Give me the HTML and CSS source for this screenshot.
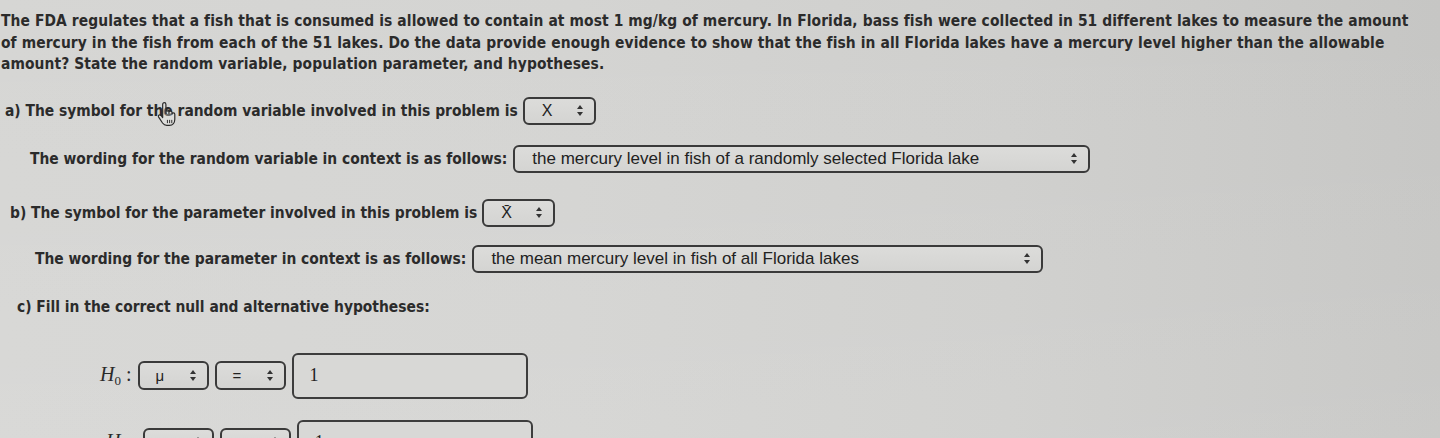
FILE: index.html
```html
<!DOCTYPE html>
<html>
<head>
<meta charset="utf-8">
<link rel="stylesheet" href="styles.css">
</head>
<body>
<div class="page">
  <p class="intro">The FDA regulates that a fish that is consumed is allowed to contain at most 1 mg/kg of mercury. In Florida, bass fish were collected in 51 different lakes to measure the amount of mercury in the fish from each of the 51 lakes. Do the data provide enough evidence to show that the fish in all Florida lakes have a mercury level higher than the allowable amount? State the random variable, population parameter, and hypotheses.</p>

  <div class="row row-a">
    <span class="label">a) The symbol for the random variable involved in this problem is</span>
    <div class="select sel-sym"><span class="val">X</span><span class="arrows"></span></div>
    <svg class="cursor" width="22" height="26" viewBox="0 0 20 24">
      <path d="M6 2.2c0-1 .7-1.6 1.5-1.6S9 1.2 9 2.2V10.5V8.6c0-.9.7-1.4 1.4-1.4s1.4.5 1.4 1.4v2.2V9.6c0-.9.7-1.3 1.4-1.3s1.4.4 1.4 1.3v1.6c0-.8.6-1.2 1.3-1.2s1.3.4 1.3 1.2V16c0 3-1.8 5.6-5 5.6H9.8c-1.8 0-2.9-.8-3.9-2.2L2.3 14c-.5-.8-.3-1.6.4-2s1.5-.1 2 .6L6 14.4Z" fill="rgba(235,235,233,0.35)" stroke="#2a2a2a" stroke-width="1.1" stroke-linejoin="round"/>
      <path d="M10.4 16.5v3M12.4 16.5v3M14.4 16.5v3" stroke="#2a2a2a" stroke-width="0.9"/>
    </svg>
  </div>

  <div class="row row-aw">
    <span class="label">The wording for the random variable in context is as follows:</span>
    <div class="select sel-wide1"><span class="val">the mercury level in fish of a randomly selected Florida lake</span><span class="arrows"></span></div>
  </div>

  <div class="row row-b">
    <span class="label">b) The symbol for the parameter involved in this problem is</span>
    <div class="select sel-sym"><span class="val">X&#772;</span><span class="arrows"></span></div>
  </div>

  <div class="row row-bw">
    <span class="label">The wording for the parameter in context is as follows:</span>
    <div class="select sel-wide2"><span class="val">the mean mercury level in fish of all Florida lakes</span><span class="arrows"></span></div>
  </div>

  <div class="row row-c">
    <span class="label">c) Fill in the correct null and alternative hypotheses:</span>
  </div>

  <div class="hyp hyp-0">
    <span class="hlabel"><i>H</i><sub>0</sub> :</span>
    <div class="select sel-small"><span class="val">μ</span><span class="arrows"></span></div>
    <div class="select sel-small"><span class="val">=</span><span class="arrows"></span></div>
    <div class="input"><span>1</span></div>
  </div>

  <div class="hyp hyp-a">
    <span class="hlabel"><i>H</i><sub>a</sub> :</span>
    <div class="select sel-small"><span class="val">μ</span><span class="arrows"></span></div>
    <div class="select sel-small"><span class="val">&gt;</span><span class="arrows"></span></div>
    <div class="input"><span>1</span></div>
  </div>
</div>
</body>
</html>
```
FILE: styles.css
```css
html, body {
  margin: 0;
  padding: 0;
  height: 438px;
  overflow: hidden;
}
body {
  background:
    linear-gradient(180deg, rgba(255,255,255,0.0) 0%, rgba(255,255,255,0.04) 60%, rgba(255,255,255,0.07) 100%),
    linear-gradient(90deg, #d6d6d4 0%, #d4d4d2 40%, #cfcfcd 70%, #c6c6c4 100%);
  color: #2b2b2b;
  font-family: "DejaVu Sans Condensed", "DejaVu Sans", sans-serif;
}
.page {
  padding-top: 11px;
}
.intro {
  margin: 0;
  padding-left: 1px;
  width: 1410px;
  font-size: 15.4px;
  font-weight: bold;
  line-height: 21.5px;
  letter-spacing: 0.1px;
}
.row {
  display: flex;
  align-items: center;
  font-size: 15.4px;
  font-weight: bold;
}
.label { white-space: nowrap; }
.row-a { margin-top: 21px; padding-left: 5px; gap: 5px; position: relative; }
.cursor {
  position: absolute;
  left: 156px;
  top: 5px;
}
.row-aw { margin-top: 20px; padding-left: 30px; gap: 6px; }
.row-b { margin-top: 26px; padding-left: 10px; gap: 5px; }
.row-bw { margin-top: 18px; padding-left: 35px; gap: 6px; }
.row-c { margin-top: 25px; padding-left: 17px; }

.select {
  box-sizing: border-box;
  height: 28px;
  border: 2px solid #3a3a3a;
  border-radius: 6px;
  background: linear-gradient(180deg, #dcdcda 0%, #d4d4d2 100%);
  display: flex;
  align-items: center;
  justify-content: space-between;
  font-family: "Liberation Sans", Arial, sans-serif;
  font-weight: normal;
  font-size: 17px;
  color: #222;
  padding: 0 10px 0 17px;
}
.arrows {
  width: 7px;
  height: 11px;
  position: relative;
  flex: none;
}
.arrows::before, .arrows::after {
  content: "";
  position: absolute;
  left: 0;
  border-left: 3.5px solid transparent;
  border-right: 3.5px solid transparent;
}
.arrows::before { top: 0; border-bottom: 4px solid #333; }
.arrows::after { bottom: 0; border-top: 4px solid #333; }

.sel-sym { width: 73px; }
.sel-sym .val { font-size: 16px; }
.sel-wide1 { width: 577px; }
.sel-wide2 { width: 571px; }

.hyp {
  display: flex;
  align-items: center;
  gap: 6px;
  padding-left: 100px;
}
.hyp-0 { margin-top: 37px; }
.hyp-a { margin-top: 21px; padding-left: 106px; }
.hlabel {
  font-family: "Liberation Serif", "Times New Roman", serif;
  font-size: 20px;
  color: #2a2a2a;
  white-space: nowrap;
}
.hlabel sub { font-size: 13px; vertical-align: -4px; }
.sel-small {
  width: 71px;
  height: 29px;
  padding: 0 10px 0 16px;
  font-size: 15px;
}
.input {
  box-sizing: border-box;
  width: 236px;
  height: 46px;
  border: 2px solid #3d3d3d;
  border-radius: 6px;
  background: #d8d8d6;
  display: flex;
  align-items: center;
  padding-left: 16px;
  font-family: "Liberation Serif", "Times New Roman", serif;
  font-size: 18px;
  color: #222;
}
```
